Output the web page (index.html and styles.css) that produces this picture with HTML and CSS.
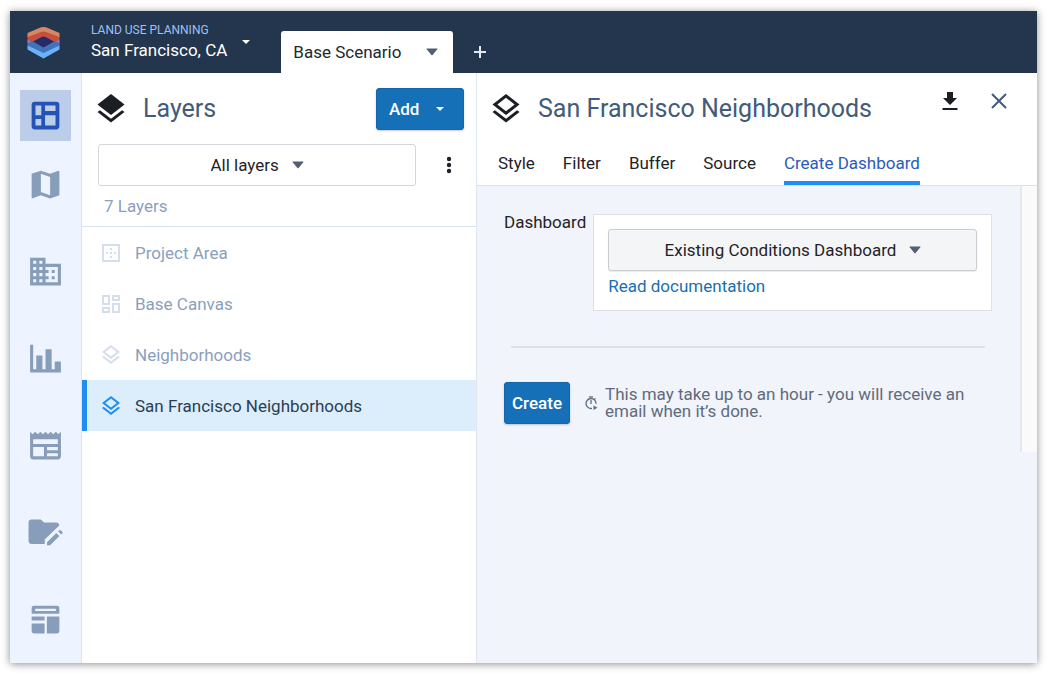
FILE: index.html
```html
<!DOCTYPE html>
<html lang="en">
<head>
<meta charset="utf-8">
<title>Land Use Planning</title>
<link rel="stylesheet" href="styles.css">
</head>
<body>
<svg class="defs" aria-hidden="true">
  <symbol id="layers-outline" viewBox="0 0 24 24"><path d="M12,18.54L19.37,12.8L21,14.07L12,21.07L3,14.07L4.62,12.81L12,18.54M12,16L3,9L12,2L21,9L12,16M12,4.53L6.26,9L12,13.47L17.74,9L12,4.53Z"/></symbol>
  <symbol id="caret" viewBox="0 0 12 8"><path d="M1 0.5h10q.8 0 .3.7L6.6 7q-.6.7-1.200 0L.7 1.200Q.2.500 1 .5z"/></symbol>
  <symbol id="caret-small" viewBox="0 0 8 4"><path d="M0 0h8L4 4z"/></symbol>
</svg>
<div class="app">
  <header class="topbar">
    <svg class="logo" viewBox="0 0 32 32" aria-hidden="true">
      <path fill="#b66fd0" d="M0 13l4-1.500h24l4 1.500v3.500l-4 1.500H4l-4-1.500z"/>
      <path fill="#262a66" d="M5 14.500L16 8l11 6.500L16 22z"/>
      <path fill="#c4513d" d="M0 9L16 3l16 6v4l-4.500 2L18 10q-2-1-4 0l-9.500 5L0 13z"/>
      <path fill="#d98763" d="M0 6L13.500.3q2.500-.6 5 0L32 6v4L18.500 5q-2.500-.8-5 0L0 10z"/>
      <path fill="#3f74b8" d="M0 16l4.500-2L16 20.500 27.500 14l4.500 2v3.500L16 27.500 0 19.500z"/>
      <path fill="#6cb2fb" d="M0 18.500L16 26l16-7.500v4L16 31.500 0 22.500z"/>
    </svg>
    <button class="project" type="button">
      <span class="project-text">
        <span class="project-type">LAND USE PLANNING</span>
        <span class="project-name">San Francisco, CA</span>
      </span>
      <svg class="caret-small"><use href="#caret-small"/></svg>
    </button>
    <button class="scenario" type="button">Base Scenario <svg class="caret"><use href="#caret"/></svg></button>
    <button class="add-scenario" type="button" aria-label="Add scenario">
      <svg viewBox="0 0 12 12"><path d="M6 0v12M0 6h12"/></svg>
    </button>
  </header>
  <div class="workspace">
    <nav class="rail" aria-label="Sections">
      <button class="rail-item rail-item-active" type="button" aria-label="Layers">
        <svg viewBox="0 0 24 24"><path fill-rule="evenodd" d="M5 3h14a2 2 0 0 1 2 2v14a2 2 0 0 1-2 2H5a2 2 0 0 1-2-2V5a2 2 0 0 1 2-2zM5.500 5.500v6.300h3.800V5.500zM11.700 5.500v3.600h6.800V5.500zM5.500 14.300v4.200h3.800v-4.200zM11.700 11.800v6.700h6.800v-6.700z"/></svg>
      </button>
      <button class="rail-item" type="button" aria-label="Map">
        <svg viewBox="0 0 24 24"><path d="M20.500 3l-.16.030L15 5.100 9 3 3.360 4.900c-.21.070-.36.250-.36.480V20.500c0 .28.220.5.500.5l.16-.03L9 18.900l6 2.100 5.640-1.900c.21-.070.360-.25.360-.48V3.500c0-.28-.22-.5-.5-.5zM15 19l-6-2.110V5l6 2.110V19z"/></svg>
      </button>
      <button class="rail-item" type="button" aria-label="Buildings">
        <svg viewBox="0 0 24 24"><path d="M12 7V3H2v18h20V7H12zM6 19H4v-2h2v2zm0-4H4v-2h2v2zm0-4H4V9h2v2zm0-4H4V5h2v2zm4 12H8v-2h2v2zm0-4H8v-2h2v2zm0-4H8V9h2v2zm0-4H8V5h2v2zm10 12h-8v-2h2v-2h-2v-2h2v-2h-2V9h8v10zm-2-8h-2v2h2v-2zm0 4h-2v2h2v-2z"/></svg>
      </button>
      <button class="rail-item" type="button" aria-label="Charts">
        <svg viewBox="0 0 24 24"><path d="M2 3h2v16h2v-9h4v9h2V6h4v13h2v-5h4v7H2z"/></svg>
      </button>
      <button class="rail-item" type="button" aria-label="Reports">
        <svg viewBox="0 0 24 24"><path d="M20,11H4V8H20M20,15H13V13H20M20,19H13V17H20M11,19H4V13H11M20.330,4.670L18.670,3L17,4.670L15.330,3L13.670,4.670L12,3L10.330,4.670L8.670,3L7,4.670L5.330,3L3.670,4.670L2,3V19A2,2 0 0,0 4,21H20A2,2 0 0,0 22,19V3L20.330,4.670Z"/></svg>
      </button>
      <button class="rail-item" type="button" aria-label="Edit project">
        <svg viewBox="0 0 24 24"><path d="M3 3.500h6l2 2h8a2 2 0 0 1 1.900 1.900L11.500 16.500v2.900H3a2 2 0 0 1-2-2V5.500a2 2 0 0 1 2-2zM13 18.300l6-6 2 2-6 6h-2zM20.200 11.300l.8-.8q.4-.4.800 0l1.200 1.200q.4.4 0 .8l-.8.8z"/></svg>
      </button>
      <button class="rail-item" type="button" aria-label="Dashboards">
        <svg viewBox="0 0 24 24"><path fill-rule="evenodd" d="M4.500 3h15A1.500 1.500 0 0 1 21 4.500V8.200H3V4.500A1.500 1.500 0 0 1 4.500 3zM5.300 5v1.500h13.400V5zM3 10h8.400v2.700H3zM3 14.600h8.400V21H4.500A1.500 1.500 0 0 1 3 19.500zM12.900 10H21v9.500a1.500 1.500 0 0 1-1.500 1.500h-6.600z"/></svg>
      </button>
    </nav>
    <section class="layers">
      <div class="layers-head">
        <svg class="title-icon" viewBox="0 0 24 24"><path d="M12,16L19.360,10.270L21,9L12,2L3,9L4.630,10.270M12,18.540L4.620,12.810L3,14.070L12,21.070L21,14.070L19.370,12.800L12,18.540Z"/></svg>
        <h1 class="title">Layers</h1>
        <button class="primary add" type="button">Add <svg class="caret-small"><use href="#caret-small"/></svg></button>
      </div>
      <div class="layers-filter">
        <label class="picker">
          <select aria-label="Layer filter"><option>All layers</option></select>
          <svg class="caret"><use href="#caret"/></svg>
        </label>
        <button class="more" type="button" aria-label="More options">
          <svg viewBox="0 0 6 18"><circle cx="3" cy="3" r="2.200"/><circle cx="3" cy="9" r="2.200"/><circle cx="3" cy="15" r="2.200"/></svg>
        </button>
      </div>
      <p class="count">7 Layers</p>
      <ul class="layer-list">
        <li><button class="layer" type="button"><svg viewBox="0 0 24 24"><path fill-rule="evenodd" d="M3 3h18v18H3zM5 5v14h14V5zM11 7h2v2h-2zM11 11h2v2h-2zM11 15h2v2h-2zM7 11h2v2H7zM15 11h2v2h-2z"/></svg>Project Area</button></li>
        <li><button class="layer" type="button"><svg viewBox="0 0 24 24"><path d="M19 5v2h-4V5h4M9 5v6H5V5h4m10 8v6h-4v-6h4M9 17v2H5v-2h4M21 3h-8v6h8V3zM11 3H3v10h8V3zm10 8h-8v10h8V11zm-10 4H3v6h8v-6z"/></svg>Base Canvas</button></li>
        <li><button class="layer" type="button"><svg><use href="#layers-outline"/></svg>Neighborhoods</button></li>
        <li><button class="layer layer-active" type="button"><svg><use href="#layers-outline"/></svg>San Francisco Neighborhoods</button></li>
      </ul>
    </section>
    <main class="detail">
      <div class="detail-head">
        <div class="detail-title">
          <svg class="title-icon"><use href="#layers-outline"/></svg>
          <h2 class="title">San Francisco Neighborhoods</h2>
          <div class="detail-actions">
            <button class="icon-button" type="button" aria-label="Download"><svg class="download" viewBox="0 0 16 20"><path d="M5 1h6v6h4l-7 7-7-7h4zM.5 17h15v2H.5z"/></svg></button>
            <button class="icon-button" type="button" aria-label="Close"><svg class="close" viewBox="0 0 16 16"><path d="M1 1l14 14M15 1L1 15"/></svg></button>
          </div>
        </div>
        <div class="tabs" role="tablist">
          <button class="tab" type="button" role="tab">Style</button>
          <button class="tab" type="button" role="tab">Filter</button>
          <button class="tab" type="button" role="tab">Buffer</button>
          <button class="tab" type="button" role="tab">Source</button>
          <button class="tab tab-active" type="button" role="tab" aria-selected="true">Create Dashboard</button>
        </div>
      </div>
      <div class="detail-body">
        <form class="form">
          <div class="field">
            <label for="dashboard">Dashboard</label>
            <div class="card">
              <label class="picker picker-filled">
                <select id="dashboard"><option>Existing Conditions Dashboard</option></select>
                <svg class="caret"><use href="#caret"/></svg>
              </label>
              <a class="docs" href="#docs">Read documentation</a>
            </div>
          </div>
          <hr class="rule">
          <div class="submit">
            <button class="primary" type="button">Create</button>
            <svg class="timer" viewBox="0 0 14 14"><path d="M5 .8h4M7 4v4M10.500 3.400l1-1M8 12.400A5 5 0 1 1 12 7.800" fill="none" stroke="currentColor" stroke-width="1.300"/><path d="M9.500 9.500l4 2.300-4 2.200z"/></svg>
            <p class="note">This may take up to an hour - you will receive an email when it’s done.</p>
          </div>
        </form>
        <div class="scroll-track"></div>
      </div>
    </main>
  </div>
</div>
</body>
</html>
```
FILE: styles.css
```css
* { box-sizing: border-box; }
body {
  margin: 0;
  padding: 11px 14px 13px 10px;
  min-height: 100vh;
  display: flex;
  background: #fff;
  color: #1f2328;
  font: 400 16px/20px Roboto, sans-serif;
}
button, select {
  font: inherit;
  color: inherit;
  background: none;
  border: 0;
  padding: 0;
  margin: 0;
  cursor: pointer;
}
svg { fill: currentColor; flex: none; display: block; }
h1, h2, p, ul { margin: 0; padding: 0; }
.defs { position: absolute; width: 0; height: 0; }

.app {
  flex: 1;
  display: flex;
  flex-direction: column;
  box-shadow: 0 1px 8px rgba(0, 0, 0, .45);
}

.topbar {
  display: flex;
  height: 62px;
  padding-left: 17px;
  background: #24364d;
  color: #fff;
}
.logo { width: 33px; height: 32px; margin-top: 16px; }
.project {
  display: flex;
  align-items: center;
  gap: 15px;
  margin-left: 31px;
  text-align: left;
}
.project-text { display: flex; flex-direction: column; }
.project-type { font-size: 12px; line-height: 16px; color: #9cc0f8; }
.project-name { font-size: 17px; line-height: 24px; }
.caret-small { width: 8px; height: 4px; }
.caret { width: 12px; height: 8px; color: #525f73; }
.scenario {
  display: flex;
  align-items: center;
  justify-content: space-between;
  align-self: flex-end;
  width: 172px;
  height: 42px;
  margin-left: 31px;
  padding: 0 15px 0 12px;
  background: #fff;
  color: #24282e;
  border-radius: 3px 3px 0 0;
  font-size: 17px;
}
.add-scenario {
  align-self: flex-end;
  width: 53px;
  height: 42px;
  display: grid;
  place-items: center;
}
.add-scenario svg { width: 12px; height: 12px; stroke: #e4e9f0; stroke-width: 2; }

.workspace { flex: 1; display: flex; }

.rail {
  display: flex;
  flex-direction: column;
  align-items: center;
  width: 72px;
  padding-top: 17px;
  background: #edf4ff;
  border-right: 1px solid #dbe4ef;
  color: #879db9;
}
.rail-item {
  display: grid;
  place-items: center;
  width: 51px;
  height: 87px;
}
.rail-item svg { width: 37px; height: 37px; }
.rail-item-active {
  height: 51px;
  background: #bccdea;
  color: #2453b5;
}

.layers {
  width: 394px;
  display: flex;
  flex-direction: column;
  background: #fff;
}
.layers-head {
  display: flex;
  align-items: center;
  padding: 15px 12px 0 11px;
}
.title-icon { width: 36px; height: 36px; color: #1b1f24; }
.title {
  margin-left: 14px;
  font-size: 25px;
  line-height: 32px;
  font-weight: 400;
  color: #425b7b;
}
.primary {
  height: 42px;
  padding: 0 7px;
  background: #1570b8;
  color: #fff;
  border-radius: 3px;
  border: 1px solid #1466a8;
  font-size: 17px;
  font-weight: 500;
  box-shadow: 0 1px 2px rgba(30, 50, 80, .25);
}
.add {
  display: flex;
  align-items: center;
  gap: 17px;
  width: 88px;
  margin-left: auto;
  padding: 0 12px;
}
.layers-filter {
  display: flex;
  align-items: center;
  gap: 20px;
  padding: 14px 14px 0 16px;
}
.picker {
  flex: 1;
  display: flex;
  align-items: center;
  justify-content: center;
  gap: 12px;
  height: 42px;
  border: 1px solid #d3d6da;
  border-radius: 3px;
  font-size: 17px;
}
.picker select { appearance: none; outline: 0; }
.more { width: 26px; height: 42px; display: grid; place-items: center; }
.more svg { width: 6px; height: 18px; }
.count {
  padding: 9px 22px;
  font-size: 17px;
  line-height: 22px;
  color: #8a9fbd;
}
.layer-list { list-style: none; border-top: 1px solid #d9e3ee; }
.layer {
  display: flex;
  align-items: center;
  gap: 12px;
  width: 100%;
  height: 51px;
  padding-left: 12px;
  border-left: 5px solid transparent;
  font-size: 17px;
  color: #8a9fbd;
}
.layer svg { width: 24px; height: 24px; color: #d5dfec; }
.layer-active {
  background: #dceefb;
  border-left-color: #1f8df2;
  color: #2b3d55;
}
.layer-active svg { color: #1f8df2; }

.detail {
  flex: 1;
  min-width: 0;
  background: #f1f4fa;
  border-left: 1px solid #dde6f1;
}
.detail-head { background: #fff; border-bottom: 1px solid #d8e1ec; }
.detail-title {
  display: flex;
  align-items: center;
  padding: 18px 30px 0 11px;
}
.detail-actions {
  display: flex;
  align-items: center;
  align-self: flex-start;
  gap: 33px;
  margin-left: auto;
}
.icon-button { display: grid; place-items: center; }
.download { width: 16px; height: 20px; color: #1b1f24; }
.close { width: 16px; height: 16px; stroke: #425b7b; stroke-width: 2; }
.tabs { display: flex; gap: 28px; padding: 15px 21px 0; }
.tab {
  height: 43px;
  padding-top: 3px;
  border-bottom: 4px solid transparent;
  font-size: 17px;
  white-space: nowrap;
}
.tab-active { color: #2a5bb8; border-bottom-color: #1f8df2; }

.detail-body { display: flex; }
.form { flex: 1; padding: 28px 28px 28px 27px; }
.field {
  display: flex;
  align-items: flex-start;
  gap: 7px;
  font-size: 17px;
}
.field > label { line-height: 16px; }
.card {
  flex: 1;
  padding: 14px;
  background: #fff;
  border: 1px solid #dcdfe3;
}
.picker-filled {
  background: #f4f5f7;
  border-color: #c9ccd1;
  box-shadow: 0 1px 1px rgba(0, 0, 0, .08);
}
.docs {
  display: block;
  padding-top: 5px;
  line-height: 20px;
  color: #196fad;
  text-decoration: none;
}
.rule {
  margin: 35px 7px 34px;
  border: 0;
  border-top: 2px solid #dde1e7;
}
.submit { display: flex; align-items: center; }
.timer { width: 14px; height: 14px; margin: 0 7px 0 14px; color: #5f6c80; }
.note { font-size: 17px; line-height: 17px; color: #5f6b7c; }
.scroll-track {
  width: 17px;
  background: #fafafa;
  border-left: 2px solid #e8e8e8;
}
```
